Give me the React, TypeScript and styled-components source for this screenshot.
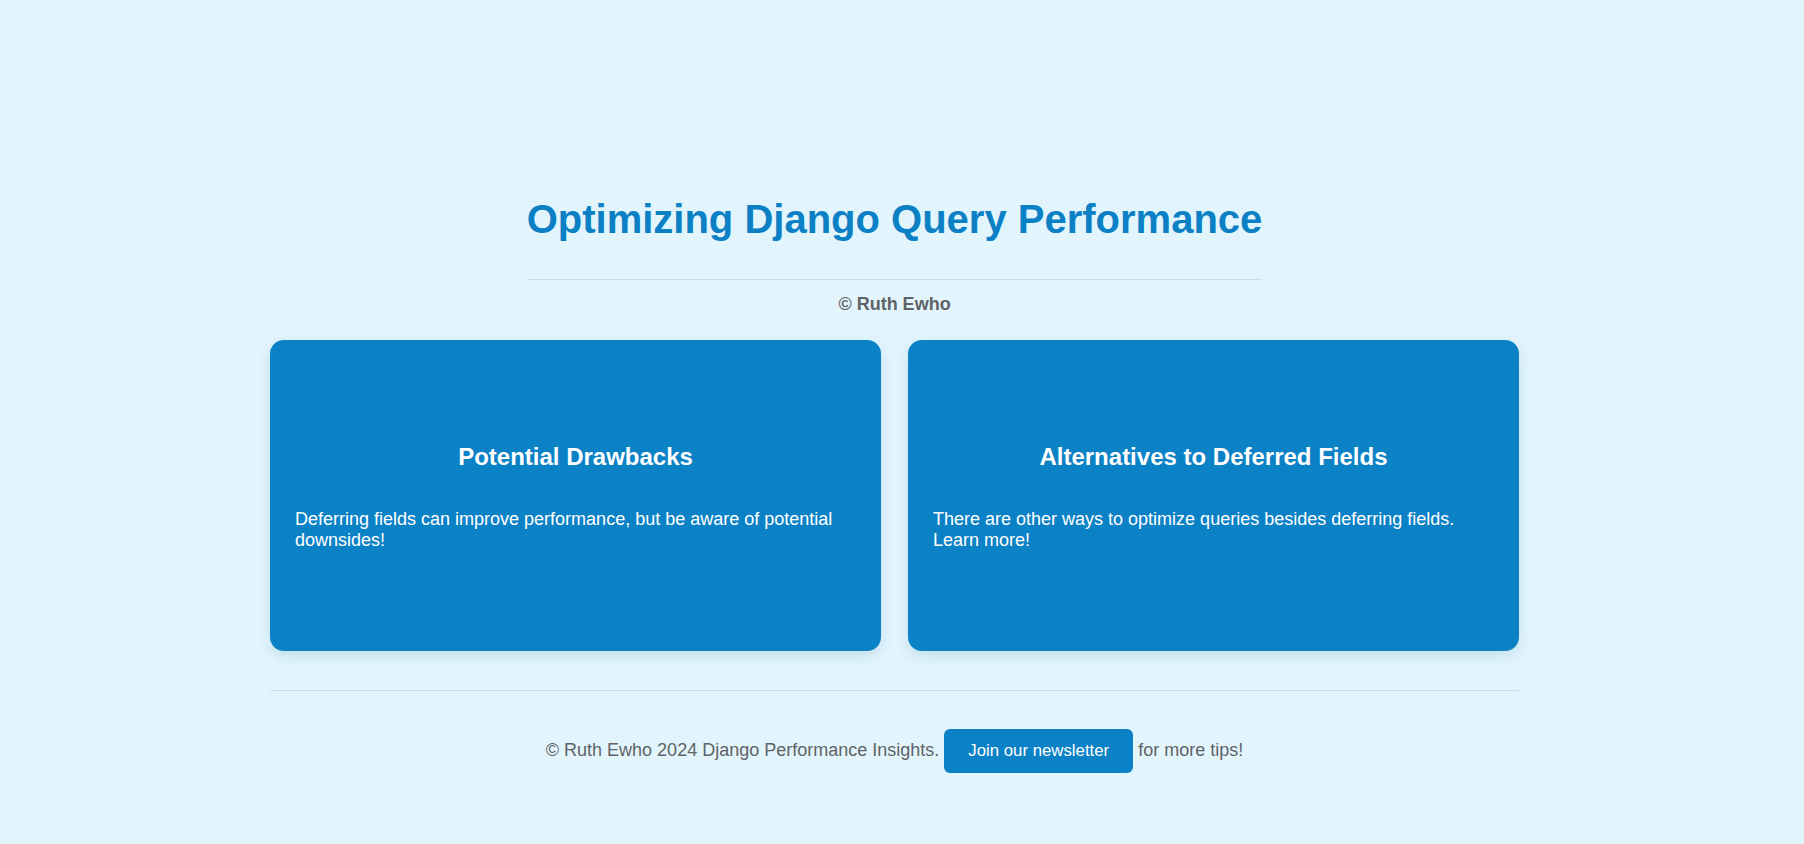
import styled, { createGlobalStyle } from "styled-components";

const GlobalStyle = createGlobalStyle`
  html, body {
    margin: 0;
    padding: 0;
    background-color: #e2f5fd;
    font-family: "Liberation Sans", Arial, sans-serif;
  }
`;

const Page = styled.div`
  min-height: 844px;
  box-sizing: border-box;
  padding: 196px 15px 0 0;
  display: flex;
  flex-direction: column;
  align-items: center;
`;

const Header = styled.header`
  display: flex;
  flex-direction: column;
  align-items: stretch;
  text-align: center;
`;

const Title = styled.h1`
  margin: 0;
  font-size: 40px;
  line-height: 46px;
  font-weight: 700;
  color: #0b80c5;
`;

const Divider = styled.hr<{ $top: number }>`
  border: none;
  border-top: 1px solid #d3dde1;
  margin: ${(p) => p.$top}px 0 0;
  width: 100%;
`;

const Byline = styled.p`
  margin: 14px 0 0;
  font-size: 18px;
  line-height: 21px;
  font-weight: 700;
  color: #5f6366;
`;

const CardGrid = styled.section`
  width: 1249px;
  margin-top: 25px;
  display: grid;
  grid-template-columns: 1fr 1fr;
  gap: 27px;
`;

const Card = styled.article`
  height: 311px;
  box-sizing: border-box;
  padding: 2px 25px 0;
  border-radius: 14px;
  background-color: #0b81c6;
  color: #ffffff;
  box-shadow: 0 5px 14px rgba(20, 90, 130, 0.14);
  display: flex;
  flex-direction: column;
  justify-content: center;
  gap: 38px;
`;

const CardTitle = styled.h2`
  margin: 0;
  font-size: 24px;
  line-height: 28px;
  font-weight: 700;
  text-align: center;
`;

const CardText = styled.p`
  margin: 0;
  font-size: 18px;
  line-height: 21px;
`;

const Footer = styled.footer`
  width: 1249px;
  display: flex;
  flex-direction: column;
  align-items: center;
`;

const FooterLine = styled.p`
  margin: 37px 0 0;
  font-size: 18px;
  line-height: 44px;
  color: #5f6366;
  text-align: center;
`;

const NewsletterButton = styled.button`
  display: inline-block;
  vertical-align: middle;
  height: 44px;
  padding: 0 24px;
  border: none;
  border-radius: 6px;
  background-color: #0b81c6;
  color: #ffffff;
  font-family: "Liberation Sans", Arial, sans-serif;
  font-size: 16.8px;
  cursor: pointer;
`;

const cards = [
  {
    title: "Potential Drawbacks",
    text: "Deferring fields can improve performance, but be aware of potential downsides!",
  },
  {
    title: "Alternatives to Deferred Fields",
    text: "There are other ways to optimize queries besides deferring fields. Learn more!",
  },
];

const App = () => {
  return (
    <>
      <GlobalStyle />
      <Page>
        <Header>
          <Title>Optimizing Django Query Performance</Title>
          <Divider $top={37} />
          <Byline>© Ruth Ewho</Byline>
        </Header>

        <CardGrid>
          {cards.map((card) => (
            <Card key={card.title}>
              <CardTitle>{card.title}</CardTitle>
              <CardText>{card.text}</CardText>
            </Card>
          ))}
        </CardGrid>

        <Footer>
          <Divider $top={39} />
          <FooterLine>
            © Ruth Ewho 2024 Django Performance Insights.{" "}
            <NewsletterButton>Join our newsletter</NewsletterButton> for more
            tips!
          </FooterLine>
        </Footer>
      </Page>
    </>
  );
};

export default App;
